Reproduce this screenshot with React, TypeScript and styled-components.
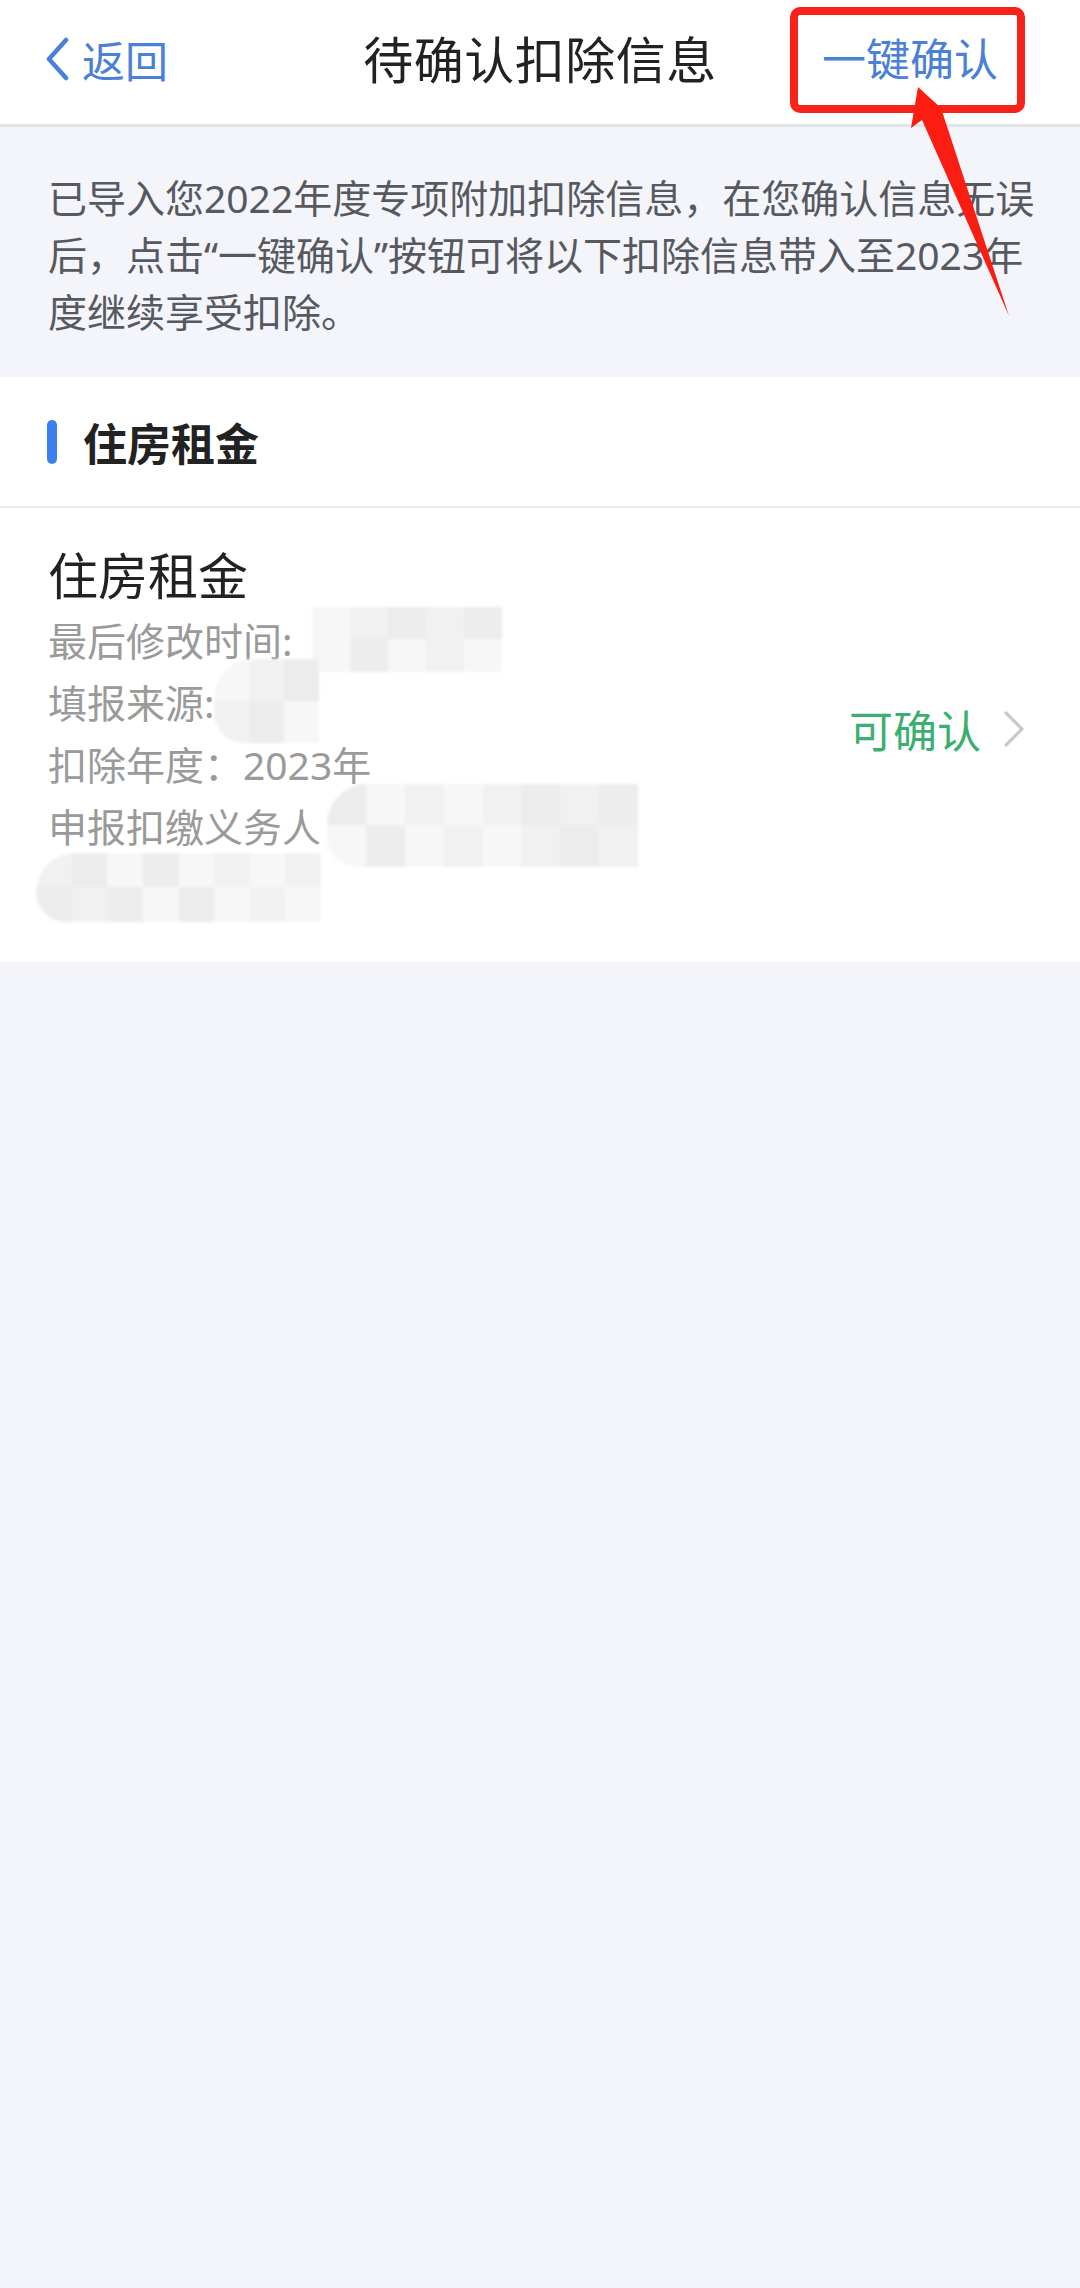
import { createGlobalStyle } from 'styled-components';
import styled from 'styled-components';

const GlobalStyle = createGlobalStyle`
  html, body {
    margin: 0;
    padding: 0;
    background: #f4f5fa;
  }
  body {
    font-family: 'Noto Sans', 'Noto Sans CJK SC', sans-serif;
    -webkit-font-smoothing: antialiased;
  }
`;

const SHADES = ['#f1f1f1', '#f5f5f5', '#eeeeee', '#f7f7f7', '#f0f0f0', '#f3f3f3', '#ececec', '#f6f6f6', '#efefef'];

const App = () => {
  return (
    <Page>
      <GlobalStyle />
      <NavBar>
        <BackButton>
          <svg width="26" height="44" viewBox="0 0 26 44" fill="none">
            <path d="M22 3 L5 22 L22 41" stroke="#4a80d6" strokeWidth="4.5" strokeLinecap="round" strokeLinejoin="round" />
          </svg>
          <span>返回</span>
        </BackButton>
        <NavTitle>待确认扣除信息</NavTitle>
        <NavAction>一键确认</NavAction>
      </NavBar>

      <Notice>
        已导入您2022年度专项附加扣除信息，在您确认信息无误后，点击“一键确认”按钮可将以下扣除信息带入至2023年度继续享受扣除。
      </Notice>

      <SectionHeader>
        <SectionMark />
        <SectionTitle>住房租金</SectionTitle>
      </SectionHeader>

      <Card>
        <CardInfo>
          <CardTitle>住房租金</CardTitle>
          <InfoRow>
            最后修改时间:
            <Masked cols={5} w={190} h={65} offset={20} seed={1} />
          </InfoRow>
          <InfoRow>
            填报来源:
            <Masked cols={3} w={105} h={84} offset={0} seed={4} round />
          </InfoRow>
          <InfoRow>扣除年度：2023年</InfoRow>
          <InfoRow>
            申报扣缴义务人
            <Masked cols={8} w={311} h={83} offset={6} seed={2} round />
          </InfoRow>
          <InfoRow>
            <Masked cols={8} w={285} h={69} offset={-12} seed={6} round />
          </InfoRow>
        </CardInfo>
        <Status>
          <span>可确认</span>
          <svg width="22" height="38" viewBox="0 0 22 38" fill="none">
            <path d="M3 3 L19 19 L3 35" stroke="#cacaca" strokeWidth="3.2" strokeLinecap="round" strokeLinejoin="round" />
          </svg>
        </Status>
      </Card>

      <RedFrame />
      <ArrowMark width="1080" height="340" viewBox="0 0 1080 340">
        <polygon points="918,87 941,108 1009,316 922,120 911,128" fill="#fb1d12" />
      </ArrowMark>
    </Page>
  );
};

type MaskedProps = { cols: number; w: number; h: number; offset: number; seed: number; round?: boolean };

const Masked = ({ cols, w, h, offset, seed, round }: MaskedProps) => {
  const tiles = Array.from({ length: cols * 2 }, (_, i) => SHADES[(i * 5 + seed * 3 + (i % 3)) % SHADES.length]);
  return (
    <MaskBox $w={w} $h={h} $offset={offset} $cols={cols} $round={round}>
      {tiles.map((shade, i) => (
        <MaskTile key={i} $shade={shade} />
      ))}
    </MaskBox>
  );
};

export default App;

const Page = styled.div`
  position: relative;
  min-height: 2288px;
  background: #f4f5fa;
`;

const NavBar = styled.header`
  display: grid;
  grid-template-columns: 1fr auto 1fr;
  align-items: center;
  height: 127px;
  box-sizing: border-box;
  padding: 0 44px 10px;
  background: #ffffff;
  border-bottom: 3px solid #e4e5e8;
`;

const BackButton = styled.div`
  display: flex;
  align-items: center;
  gap: 12px;
  color: #4a80d6;
  font-size: 43px;
  padding-top: 4px;

  svg {
    display: block;
  }
`;

const NavTitle = styled.h1`
  margin: 0;
  font-size: 50px;
  font-weight: 400;
  color: #222222;
  letter-spacing: 0.5px;
`;

const NavAction = styled.div`
  justify-self: end;
  margin-right: 38px;
  font-size: 44px;
  color: #4a80d6;
`;

const Notice = styled.p`
  margin: 0;
  padding: 42px 36px 37px 48px;
  font-size: 39px;
  line-height: 57px;
  color: #56595f;
  background: #f4f5fa;
`;

const SectionHeader = styled.div`
  display: flex;
  align-items: center;
  gap: 26px;
  height: 129px;
  padding-left: 47px;
  background: #ffffff;
  border-bottom: 2px solid #e9e9ec;
`;

const SectionMark = styled.span`
  width: 10px;
  height: 44px;
  border-radius: 5px;
  background: #3c7ff0;
`;

const SectionTitle = styled.h2`
  margin: 0;
  font-size: 44px;
  font-weight: 700;
  color: #222222;
`;

const Card = styled.section`
  display: flex;
  align-items: center;
  justify-content: space-between;
  height: 454px;
  box-sizing: border-box;
  padding: 36px 55px 44px 48px;
  background: #ffffff;
`;

const CardInfo = styled.div`
  display: flex;
  flex-direction: column;
  align-self: stretch;
`;

const CardTitle = styled.div`
  font-size: 50px;
  line-height: 64px;
  color: #222222;
`;

const InfoRow = styled.div`
  display: flex;
  align-items: center;
  height: 62px;
  font-size: 39px;
  color: #9a9a9a;
  white-space: nowrap;
`;

const MaskBox = styled.span<{ $w: number; $h: number; $offset: number; $cols: number; $round?: boolean }>`
  display: grid;
  grid-template-columns: repeat(${(p) => p.$cols}, 1fr);
  grid-template-rows: repeat(2, 1fr);
  flex: none;
  width: ${(p) => p.$w}px;
  height: ${(p) => p.$h}px;
  margin-left: ${(p) => p.$offset}px;
  overflow: hidden;
  border-radius: ${(p) => (p.$round ? '40px 4px 0 30px' : '0')};
  filter: blur(1.5px);
`;

const MaskTile = styled.span<{ $shade: string }>`
  background: ${(p) => p.$shade};
`;

const Status = styled.div`
  display: flex;
  align-items: center;
  gap: 22px;
  font-size: 44px;
  color: #3dae72;
  padding-bottom: 4px;

  svg {
    display: block;
  }
`;

const RedFrame = styled.div`
  position: absolute;
  left: 790px;
  top: 7px;
  width: 235px;
  height: 106px;
  box-sizing: border-box;
  border: 8px solid #f7231a;
  border-radius: 10px;
  pointer-events: none;
`;

const ArrowMark = styled.svg`
  position: absolute;
  left: 0;
  top: 0;
  pointer-events: none;
`;
